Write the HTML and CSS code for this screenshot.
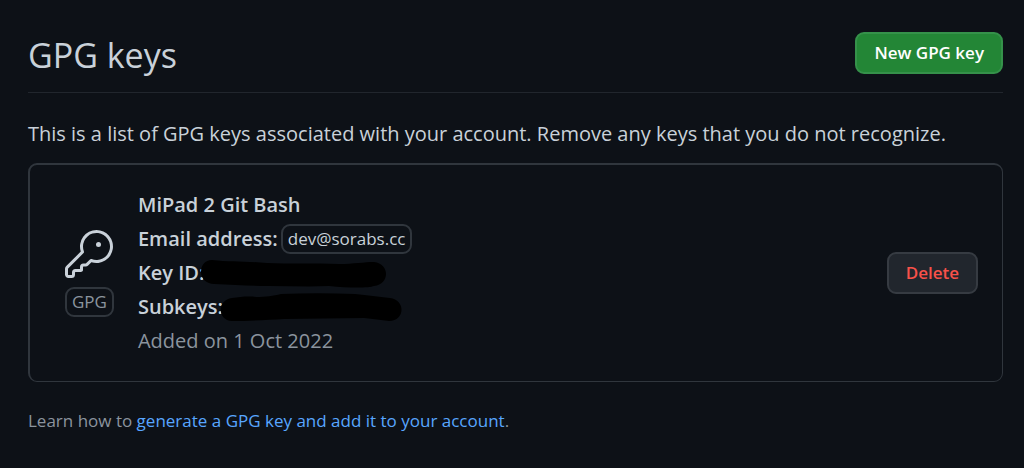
FILE: index.html
```html
<!DOCTYPE html>
<html lang="en">
<head>
<meta charset="utf-8">
<meta name="viewport" content="width=device-width, initial-scale=1">
<title>GPG keys</title>
<link rel="stylesheet" href="styles.css">
</head>
<body>
<main class="page">
  <header class="page-header">
    <h1 class="page-title">GPG keys</h1>
    <button class="btn btn-primary" type="button">New GPG key</button>
  </header>
  <p class="intro">This is a list of GPG keys associated with your account. Remove any keys that you do not recognize.</p>
  <section class="key-card">
    <div class="key-kind">
      <svg class="key-icon" viewBox="0 0 24 24" aria-hidden="true"><path d="M16.75 8.5a1.25 1.25 0 100-2.5 1.25 1.25 0 000 2.5z"/><path fill-rule="evenodd" d="M15.75 0a8.25 8.25 0 00-7.851 10.79L.513 18.178A1.75 1.75 0 000 19.414v2.836C0 23.217.784 24 1.75 24h1.5A1.75 1.75 0 005 22.25v-1a.25.25 0 01.25-.25h2.735a.75.75 0 00.545-.22l.214-.213A.875.875 0 009 19.948V18.5a.25.25 0 01.25-.25h1.086c.464 0 .91-.184 1.237-.513l1.636-1.636A8.25 8.25 0 1015.75 0zM9 8.25a6.75 6.75 0 114.288 6.287.75.75 0 00-.804.168l-1.971 1.972a.25.25 0 01-.177.073H9.25A1.75 1.75 0 007.5 18.5v1H5.25a1.75 1.75 0 00-1.75 1.75v1a.25.25 0 01-.25.25h-1.5a.25.25 0 01-.25-.25v-2.836a.25.25 0 01.073-.177l7.722-7.721a.75.75 0 00.168-.804A6.73 6.73 0 019 8.25z"/></svg>
      <span class="label label-muted">GPG</span>
    </div>
    <div class="key-details">
      <strong class="row">MiPad 2 Git Bash</strong>
      <div class="row"><strong>Email address:</strong><span class="label label-email">dev@sorabs.cc</span></div>
      <div class="row"><strong>Key ID:</strong><svg class="redaction redaction-id" viewBox="0 0 187 30" aria-hidden="true"><path d="M12 2C5 2 1 7 1 14c0 7 6 12 13 12 20 1 35 2 55 2 20 0 40 1 60 0 20 2 40 2 45 0 16-2 16-22 0-24-10 0-20 2-35 2-25-1-50 0-72-1C45 3 30 4 12 2z"/></svg></div>
      <div class="row"><strong>Subkeys:</strong><svg class="redaction" viewBox="0 0 182 30" aria-hidden="true"><path d="M12 6C-3 8-3 28 12 29c15 0 35-1 52-2l80-1c9 1 17 2 25 3 16 0 17-21 1-23-12-1-22-3-35-4-25-1-50-1-74 0-8 2-15 3-25 3-8-1-16 0-24 1z"/></svg></div>
      <div class="row row-muted">Added on 1 Oct 2022</div>
    </div>
    <button class="btn btn-danger" type="button">Delete</button>
  </section>
  <p class="help">Learn how to <a class="link" href="#generate">generate a GPG key and add it to your account</a>.</p>
</main>
</body>
</html>
```
FILE: styles.css
```css
* {
  box-sizing: border-box;
}

body {
  margin: 0;
  background: #0d1117;
  color: #c9d1d9;
  font-family: "Open Sans", "Noto Sans", sans-serif;
  font-size: 20px;
  line-height: 34px;
}

.page {
  padding: 29px 21px 24px 28px;
}

.page-header {
  display: flex;
  align-items: center;
  justify-content: space-between;
  padding-bottom: 11px;
  border-bottom: 1px solid #21262d;
}

.page-title {
  margin: 0;
  font-size: 34px;
  font-weight: 400;
  line-height: 52px;
}

.btn {
  height: 42px;
  padding: 0 17px;
  border: 2px solid #363b42;
  border-radius: 9px;
  background: #21262d;
  font: 600 17px/30px "Open Sans", "Noto Sans", sans-serif;
  white-space: nowrap;
}

.btn-primary {
  border-color: #35914a;
  background: #238636;
  color: #ffffff;
  margin-bottom: 4px;
}

.btn-danger {
  margin-left: auto;
  color: #f85149;
}

.intro {
  margin: 24px 0 13px;
  line-height: 33px;
}

.key-card {
  display: flex;
  align-items: center;
  padding: 23px 24px;
  border: solid #30363d;
  border-width: 2px 1px 1px 2px;
  border-radius: 9px;
}

.key-kind {
  display: flex;
  flex-direction: column;
  align-items: center;
  gap: 9px;
  margin: 0 24px 0 11px;
}

.key-icon {
  width: 48px;
  height: 48px;
  fill: #c9d1d9;
}

.label {
  display: inline-block;
  padding: 0 5px;
  border: 2px solid #30363d;
  border-radius: 9px;
  font-size: 17px;
  line-height: 26px;
}

.label-muted {
  color: #8b949e;
}

.row {
  display: flex;
  align-items: center;
  height: 34px;
}

strong {
  font-weight: 600;
}

.label-email {
  margin-left: 3px;
}

.redaction {
  width: 182px;
  height: 30px;
  margin-left: -3px;
  fill: #000000;
}

.redaction-id {
  width: 187px;
  margin-left: -4px;
}

.row-muted,
.help {
  color: #8b949e;
}

.help {
  margin: 24px 0 0;
  font-size: 17px;
  line-height: 30px;
}

.link {
  color: #58a6ff;
  text-decoration: none;
}
```
